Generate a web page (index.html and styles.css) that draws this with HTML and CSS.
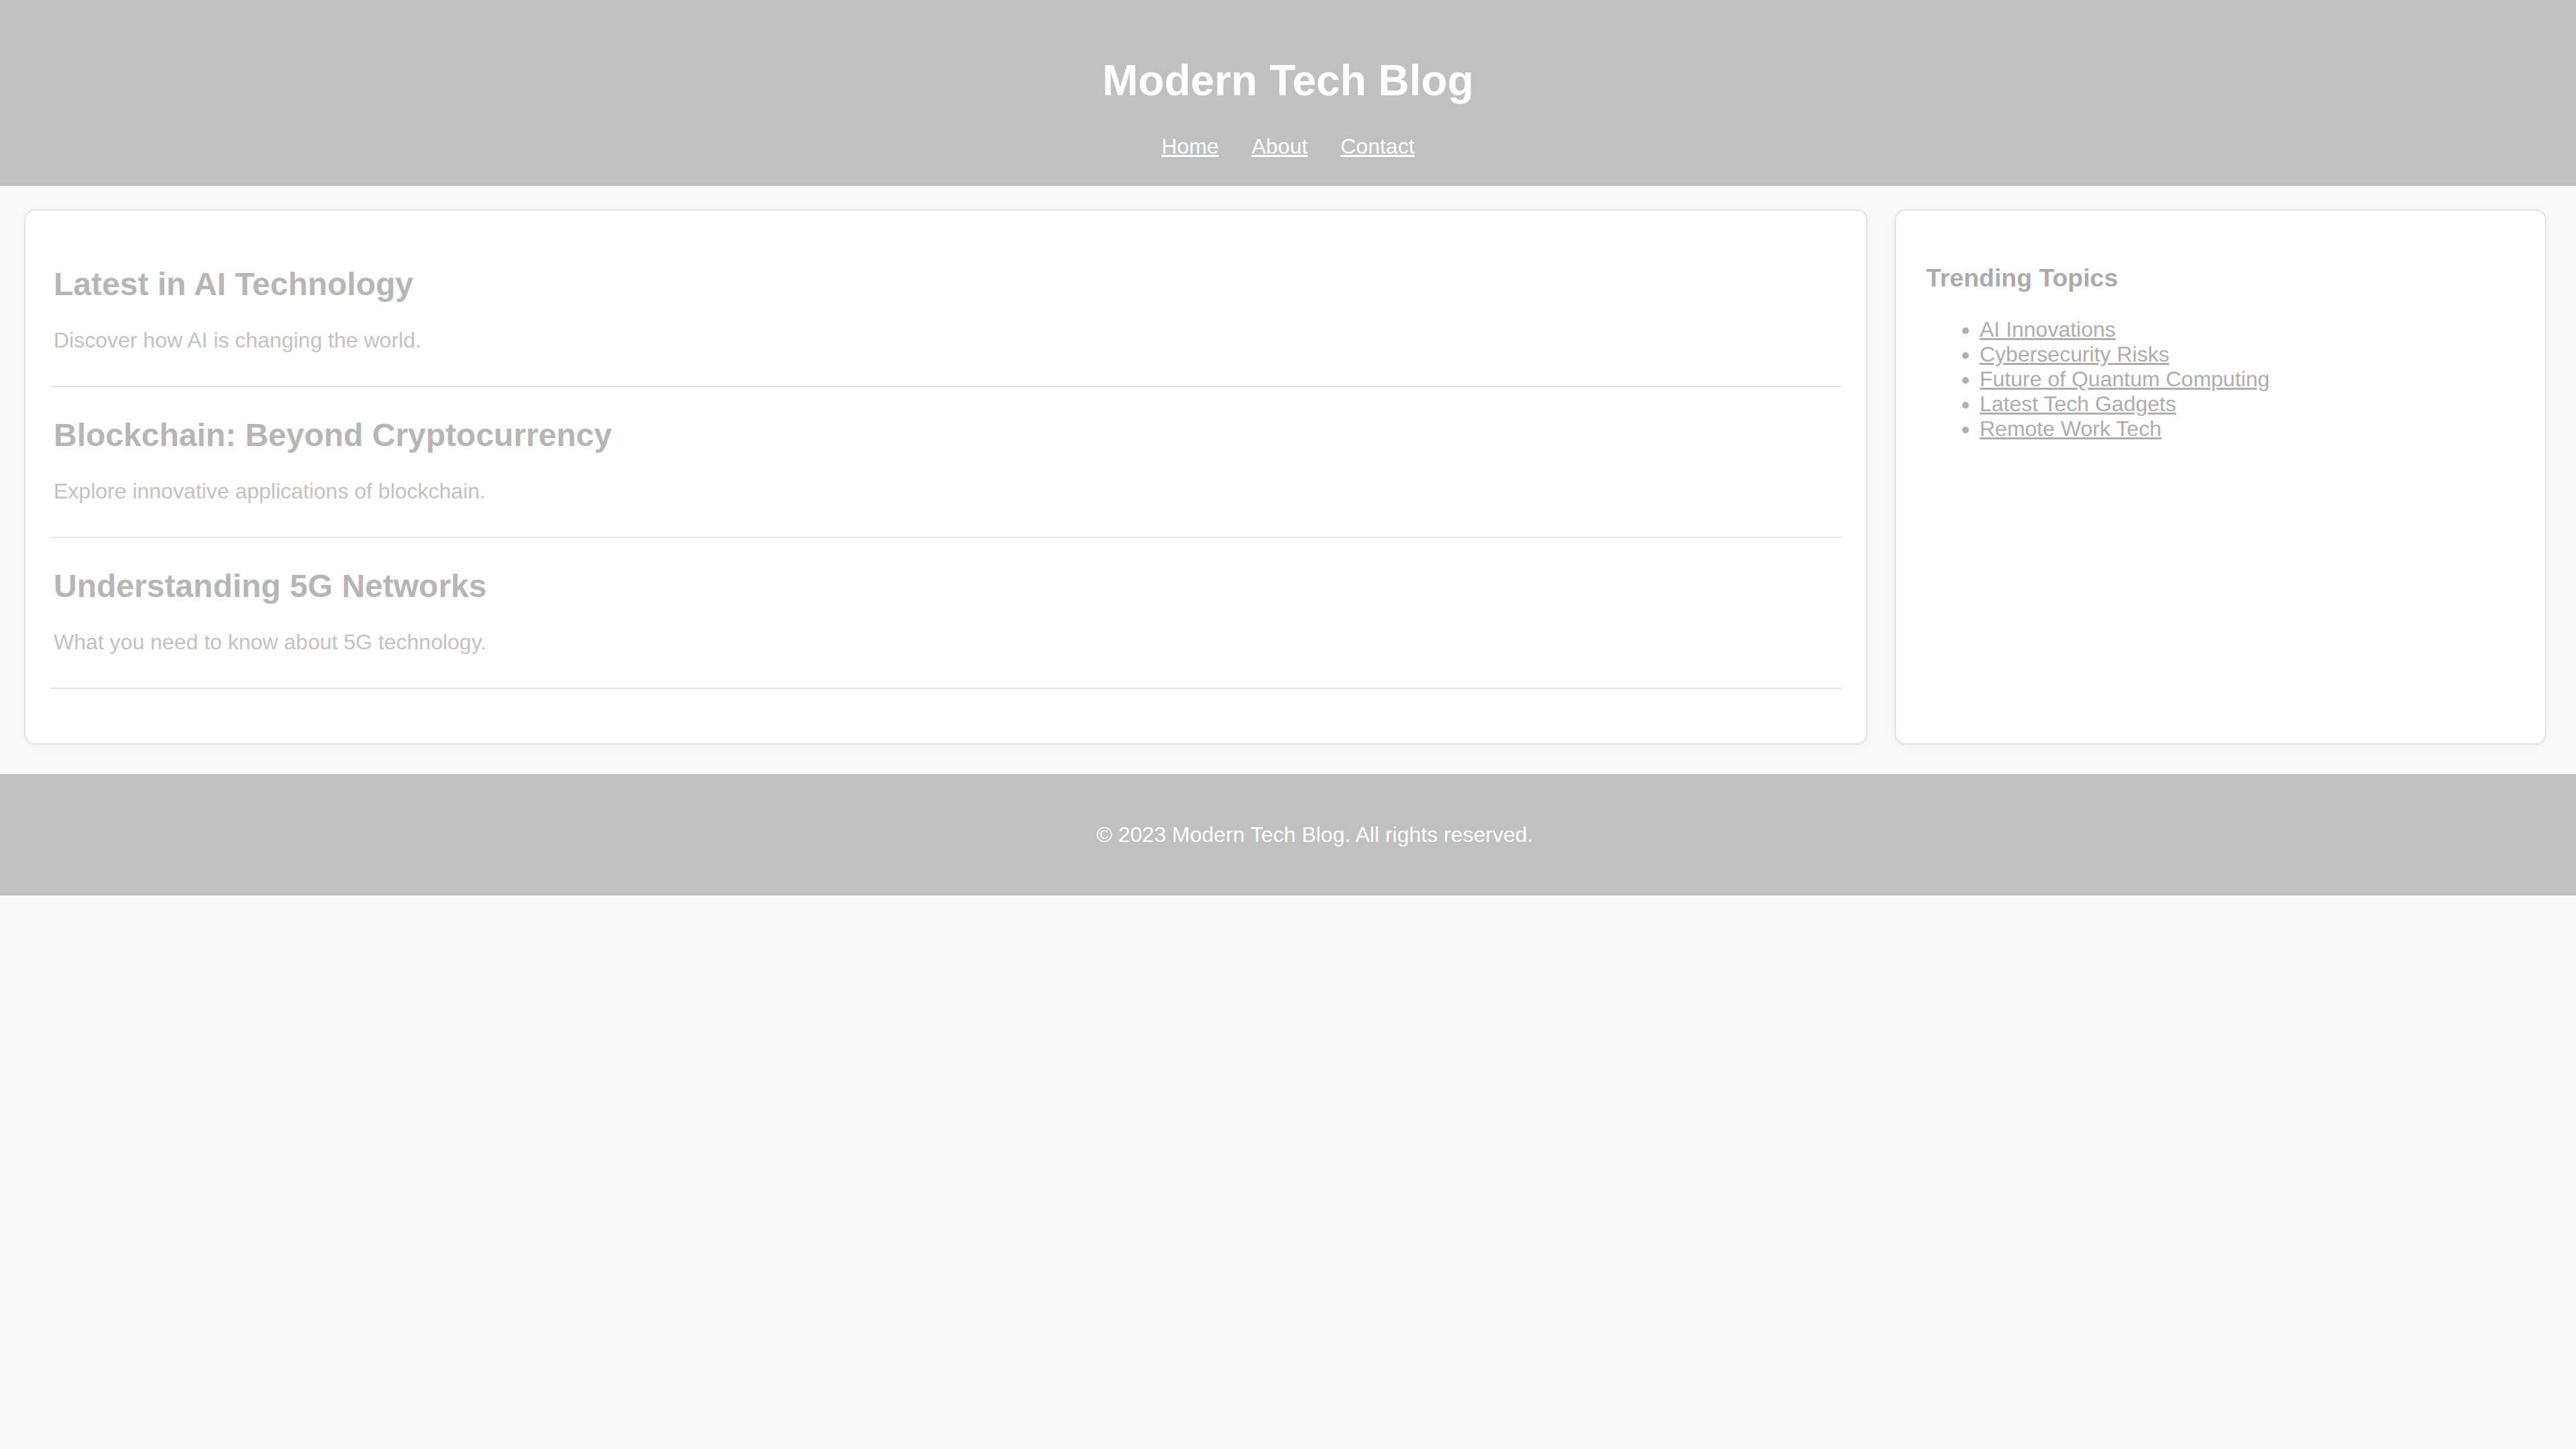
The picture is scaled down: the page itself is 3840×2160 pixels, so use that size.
FILE: index.html
```html
<!DOCTYPE html>
<html lang="en">
<head>
<meta charset="utf-8">
<title>Modern Tech Blog</title>
<link rel="stylesheet" href="styles.css">
</head>
<body>
<header class="site-header">
  <h1 class="site-title">Modern Tech Blog</h1>
  <nav class="site-nav"><a href="#">Home</a> <a href="#">About</a> <a href="#">Contact</a></nav>
</header>
<main class="layout">
  <section class="content card">
    <article class="post">
      <h2 class="post-title">Latest in AI Technology</h2>
      <p class="post-desc">Discover how AI is changing the world.</p>
    </article>
    <article class="post">
      <h2 class="post-title">Blockchain: Beyond Cryptocurrency</h2>
      <p class="post-desc">Explore innovative applications of blockchain.</p>
    </article>
    <article class="post">
      <h2 class="post-title">Understanding 5G Networks</h2>
      <p class="post-desc">What you need to know about 5G technology.</p>
    </article>
  </section>
  <aside class="sidebar card">
    <h3 class="sidebar-title">Trending Topics</h3>
    <ul class="topic-list">
      <li><a href="#">AI Innovations</a></li>
      <li><a href="#">Cybersecurity Risks</a></li>
      <li><a href="#">Future of Quantum Computing</a></li>
      <li><a href="#">Latest Tech Gadgets</a></li>
      <li><a href="#">Remote Work Tech</a></li>
    </ul>
  </aside>
</main>
<footer class="site-footer">
  <p class="footer-text">© 2023 Modern Tech Blog. All rights reserved.</p>
</footer>
</body>
</html>
```

FILE: styles.css
```css
html, body {
  margin: 0;
  padding: 0;
}
body {
  background: #fafafa;
  font-family: "Liberation Sans", Arial, sans-serif;
  font-size: 32px;
  color: #b8b8b8;
}
.site-header {
  background: #c0c0c0;
  color: #ffffff;
  text-align: center;
  padding: 40px;
}
.site-title {
  font-size: 64px;
  font-weight: bold;
  margin: 42.9px 0;
}
.site-nav a {
  color: #ffffff;
  text-decoration: underline;
  margin: 0 20px;
}
.layout {
  display: flex;
  align-items: stretch;
  gap: 40px;
  padding: 35px 44px 44px 36px;
}
.card {
  background: #ffffff;
  border: 2px solid #e2e2e2;
  border-radius: 16px;
  padding: 40px;
  box-shadow: 0 4px 16px rgba(0, 0, 0, 0.04);
}
.content {
  flex: 3;
  padding-bottom: 37px;
}
.sidebar {
  flex: 1;
  padding: 40px 35px 37px 45px;
}
.post {
  border-bottom: 2px solid #e4e4e4;
  padding: 0 5px 17px;
  margin: 0 -3px 44px;
}
.post-title {
  font-size: 48px;
  font-weight: bold;
  color: #b6b6b6;
  margin: 42px 0 38px;
}
.post-desc {
  font-size: 32px;
  color: #c2c2c2;
  margin: 32px 0;
}
.sidebar-title {
  font-size: 37.44px;
  font-weight: bold;
  color: #ababab;
  margin: 39px 0 37.44px;
}
.topic-list {
  margin: 32px 0;
  padding-left: 80px;
  color: #b0b0b0;
}
.topic-list a {
  color: #adadad;
  text-decoration: underline;
}
.site-footer {
  background: #c0c0c0;
  color: #ffffff;
  text-align: center;
  padding: 40px 40px 40px 120px;
}
.footer-text {
  margin: 32px 0;
}
```
